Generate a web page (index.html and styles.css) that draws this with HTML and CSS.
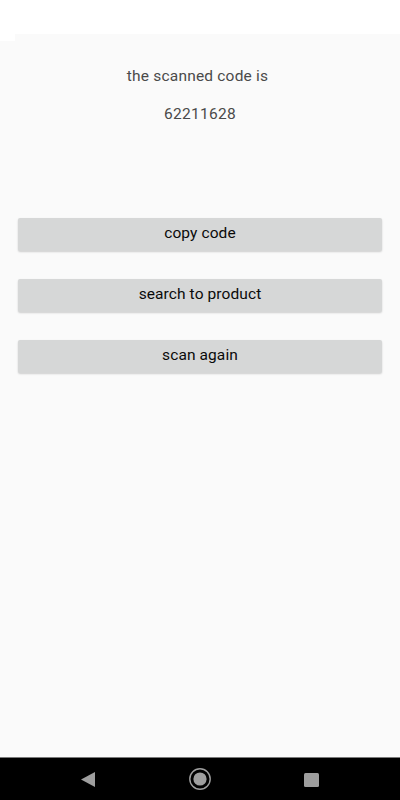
FILE: index.html
```html
<!DOCTYPE html>
<html>
<head>
<meta charset="utf-8">
<link rel="stylesheet" href="styles.css">
</head>
<body>
<div class="screen">
  <div class="statusbar"></div>
  <div class="content">
    <div class="tab"></div>
    <p class="label">the scanned code is</p>
    <p class="code">62211628</p>
    <div class="buttons">
      <button class="btn">copy code</button>
      <button class="btn">search to product</button>
      <button class="btn">scan again</button>
    </div>
  </div>
  <div class="navbar">
    <svg class="nav-back" width="14" height="15" viewBox="0 0 14 15"><polygon points="14,0 14,15 0,7.5" fill="#9e9e9e"/></svg>
    <svg class="nav-home" width="22" height="22" viewBox="0 0 22 22"><circle cx="11" cy="11" r="10.2" fill="none" stroke="#9e9e9e" stroke-width="1.4"/><circle cx="11" cy="11" r="6.6" fill="#9e9e9e"/></svg>
    <svg class="nav-recent" width="15" height="14" viewBox="0 0 15 14"><rect x="0" y="0" width="15" height="14" rx="1.5" fill="#9e9e9e"/></svg>
  </div>
</div>
</body>
</html>
```

FILE: styles.css
```css
html, body {
  margin: 0;
  padding: 0;
}
body {
  font-family: Roboto, "Noto Sans", sans-serif;
  background: #fafafa;
}
.screen {
  width: 400px;
  height: 800px;
  display: flex;
  flex-direction: column;
  position: relative;
}
.statusbar {
  height: 34px;
  background: #ffffff;
  flex: none;
}
.content {
  flex: 1;
  background: #fafafa;
  display: flex;
  flex-direction: column;
  align-items: center;
  position: relative;
}
.tab {
  position: absolute;
  left: 0;
  top: 0;
  width: 15px;
  height: 7px;
  background: #ffffff;
}
.label {
  margin: 32px 0 0;
  padding-right: 5px;
  font-size: 15.5px;
  line-height: 20px;
  color: #4a4a4a;
  letter-spacing: 0.2px;
}
.code {
  margin: 18px 0 0;
  font-size: 15.5px;
  line-height: 20px;
  color: #4a4a4a;
  letter-spacing: 0.3px;
}
.buttons {
  margin-top: 94px;
  align-self: stretch;
  padding: 0 18px;
  display: flex;
  flex-direction: column;
  gap: 28px;
}
.btn {
  height: 33px;
  border: none;
  border-radius: 2px;
  background: #d6d7d7;
  box-shadow: 0 1px 2px rgba(0, 0, 0, 0.18);
  font-family: Roboto, "Noto Sans", sans-serif;
  font-size: 15.5px;
  font-weight: 400;
  color: #0a0a0a;
  letter-spacing: 0.1px;
  padding: 0 0 3px;
}
.navbar {
  height: 43px;
  flex: none;
  background: #000000;
  border-top: 1px solid #7a7a7a;
  box-sizing: border-box;
  position: relative;
}
.nav-back {
  position: absolute;
  left: 81px;
  top: 14px;
}
.nav-home {
  position: absolute;
  left: 189px;
  top: 10px;
}
.nav-recent {
  position: absolute;
  left: 304px;
  top: 15px;
}
```
